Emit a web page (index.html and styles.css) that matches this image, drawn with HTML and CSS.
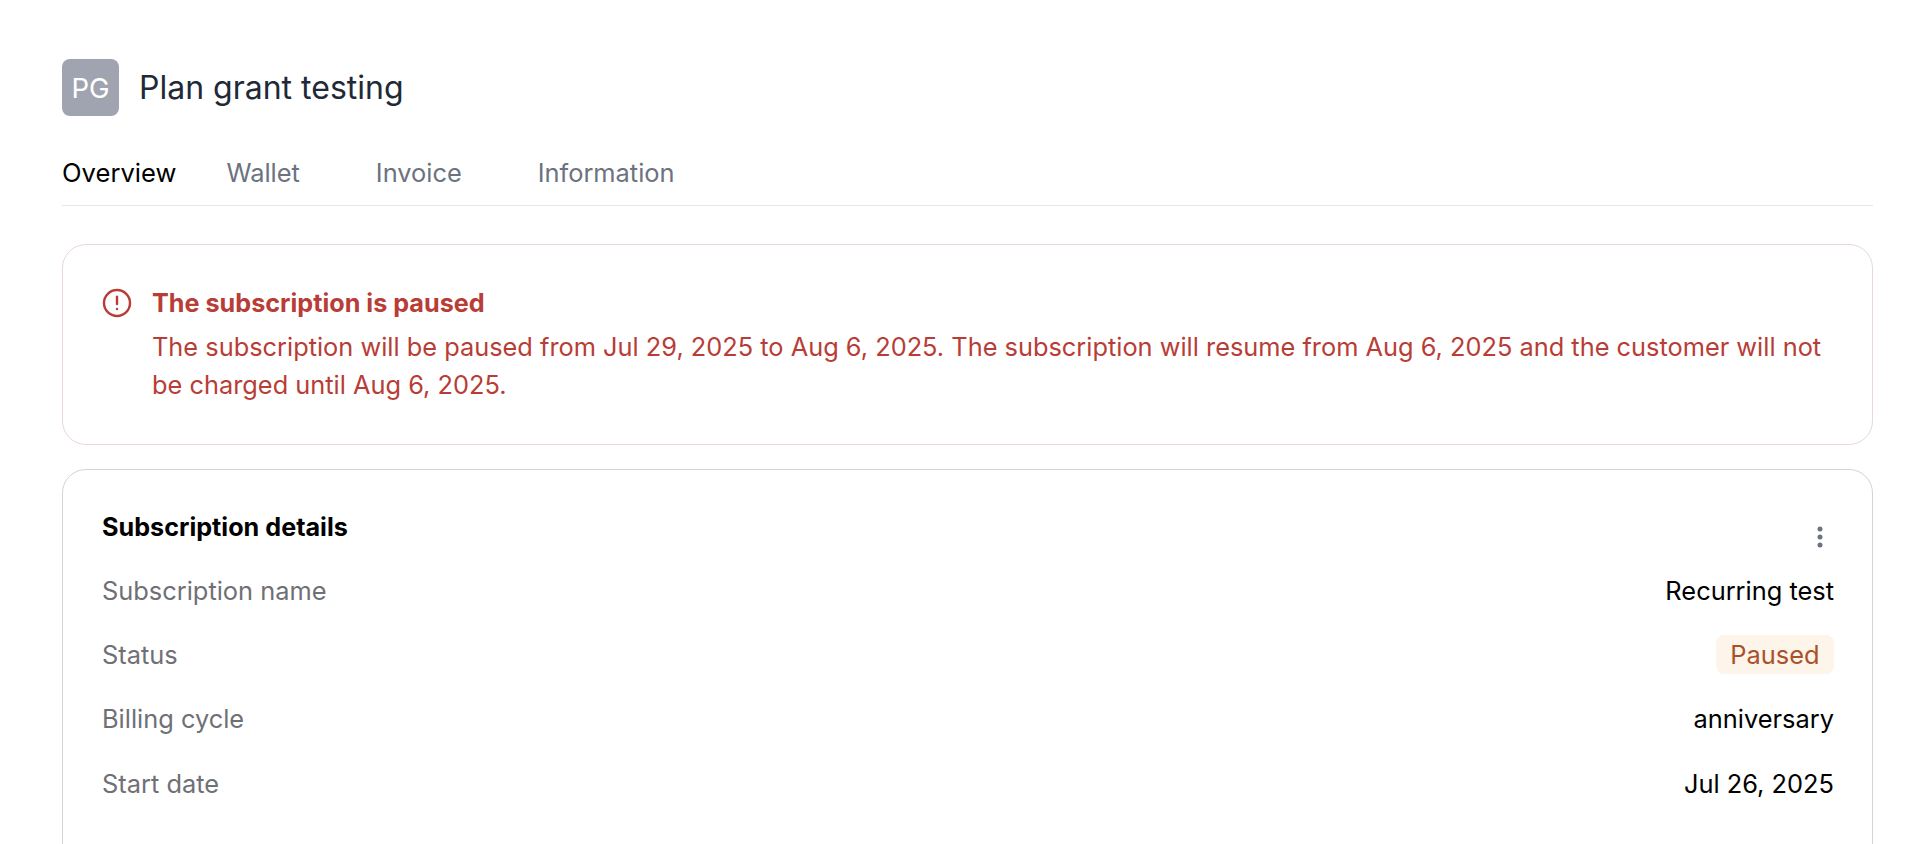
FILE: index.html
```html
<!DOCTYPE html>
<html lang="en">
<head>
    <meta charset="UTF-8">
    <title>Plan grant testing</title>
    <link rel="stylesheet" href="styles.css">
</head>
<body>
    <div class="page">
        <div class="customer">
            <div class="avatar">PG</div>
            <h1 class="customer-name">Plan grant testing</h1>
        </div>

        <div class="tabs">
            <span class="tab active">Overview</span>
            <span class="tab">Wallet</span>
            <span class="tab">Invoice</span>
            <span class="tab">Information</span>
        </div>

        <div class="card alert">
            <svg class="alert-icon" viewBox="0 0 30 30" fill="none" stroke="currentColor" stroke-width="2.4" stroke-linecap="round">
                <circle cx="15" cy="15" r="13"/>
                <path d="M15 8.8v7.2"/>
                <path d="M15 21h.01"/>
            </svg>
            <div class="alert-body">
                <div class="alert-title">The subscription is paused</div>
                <p class="alert-text">The subscription will be paused from Jul 29, 2025 to Aug 6, 2025. The subscription will resume from Aug 6, 2025 and the customer will not be charged until Aug 6, 2025.</p>
            </div>
        </div>

        <div class="card details">
            <div class="details-head">
                <h2 class="details-title">Subscription details</h2>
                <svg class="kebab" viewBox="0 0 8 24" fill="currentColor">
                    <circle cx="4" cy="4" r="2.5"/>
                    <circle cx="4" cy="12" r="2.5"/>
                    <circle cx="4" cy="20" r="2.5"/>
                </svg>
            </div>
            <div class="row">
                <span class="row-label">Subscription name</span>
                <span class="row-value">Recurring test</span>
            </div>
            <div class="row">
                <span class="row-label">Status</span>
                <span class="badge">Paused</span>
            </div>
            <div class="row">
                <span class="row-label">Billing cycle</span>
                <span class="row-value">anniversary</span>
            </div>
            <div class="row">
                <span class="row-label">Start date</span>
                <span class="row-value">Jul 26, 2025</span>
            </div>
        </div>
    </div>
</body>
</html>
```

FILE: styles.css
```css
body {
    margin: 0;
    background: #fff;
    font-family: Inter, "Liberation Sans", sans-serif;
    color: #000;
}
.page {
    height: 844px;
    box-sizing: border-box;
    overflow: hidden;
    padding: 59px 57px 0 62px;
}
.customer {
    display: flex;
    align-items: center;
    gap: 20px;
}
.avatar {
    width: 57px;
    height: 57px;
    border-radius: 8px;
    background: #a0a4b0;
    color: #fff;
    font-size: 27.5px;
    display: flex;
    align-items: center;
    justify-content: center;
}
.customer-name {
    margin: 0;
    font-size: 32px;
    font-weight: 400;
    color: #1f2937;
}
.tabs {
    display: flex;
    gap: 50px;
    margin-top: 41px;
    padding-bottom: 16px;
    border-bottom: 1px solid #e5e7eb;
}
.tab {
    font-size: 25.4px;
    line-height: 32px;
    color: #6b7280;
    padding-right: 26px;
}
.tab.active {
    font-size: 25.6px;
    color: #000;
    padding-right: 0;
}
.card {
    background: #fff;
    border: 1px solid #d4d4d8;
    border-radius: 24px;
}
.alert {
    display: flex;
    gap: 20px;
    margin-top: 38px;
    padding: 43px 38px 40px 39px;
    color: #b83d36;
    border-color: #e8d8da;
}
.alert-icon {
    width: 30px;
    height: 30px;
    flex-shrink: 0;
}
.alert-title {
    font-size: 25.2px;
    font-weight: 700;
    line-height: 30px;
}
.alert-text {
    margin: 10px 0 0;
    font-size: 25.36px;
    line-height: 38px;
}
.details {
    margin-top: 24px;
    padding: 41px 38px 40px 39px;
    height: 500px;
}
.details-head {
    display: flex;
    justify-content: space-between;
    height: 47px;
}
.details-title {
    margin: 0;
    font-size: 25.2px;
    font-weight: 700;
    line-height: 32px;
}
.kebab {
    width: 8px;
    height: 24px;
    color: #6b7280;
    margin: 14px 10px 0 0;
}
.row {
    display: flex;
    justify-content: space-between;
    align-items: center;
    height: 64.4px;
    font-size: 25.4px;
}
.row-label {
    color: #6f7076;
}
.badge {
    padding: 4px 14.5px;
    border-radius: 8px;
    background: #fdf4ea;
    color: #a9522a;
}
```
